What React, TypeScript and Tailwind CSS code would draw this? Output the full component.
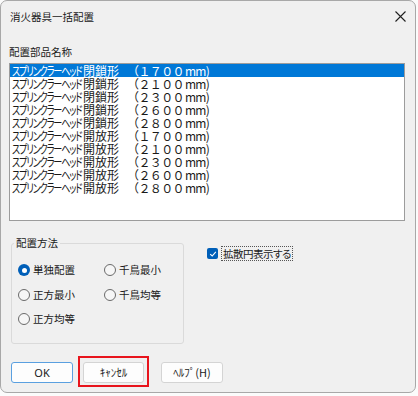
import React from "react";

const JP = "font-['Noto_Sans_CJK_JP','Noto_Sans',sans-serif]";

const rows: [string, string, string][] = [
  ["スプリンクラーヘッド", "閉鎖形", "（１７００"],
  ["スプリンクラーヘッド", "閉鎖形", "（２１００"],
  ["スプリンクラーヘッド", "閉鎖形", "（２３００"],
  ["スプリンクラーヘッド", "閉鎖形", "（２６００"],
  ["スプリンクラーヘッド", "閉鎖形", "（２８００"],
  ["スプリンクラーヘッド", "開放形", "（１７００"],
  ["スプリンクラーヘッド", "開放形", "（２１００"],
  ["スプリンクラーヘッド", "開放形", "（２３００"],
  ["スプリンクラーヘッド", "開放形", "（２６００"],
  ["スプリンクラーヘッド", "開放形", "（２８００"],
];

function Radio({ checked, label }: { checked?: boolean; label: string }) {
  return (
    <div className="flex items-center h-[24.5px]">
      {checked ? (
        <span className="w-[12px] h-[12px] rounded-full bg-[#005fb8] flex items-center justify-center">
          <span className="w-[5px] h-[5px] rounded-full bg-white" />
        </span>
      ) : (
        <span className="w-[12px] h-[12px] rounded-full border border-[#6a6a6a] bg-[#f6f6f6]" />
      )}
      <span className="ml-[3px] text-[10.5px] leading-[14px] text-[#1a1a1a]">{label}</span>
    </div>
  );
}

export default function App() {
  return (
    <div className={`w-[418px] h-[396px] bg-[#fbfbfb] ${JP}`}>
      <div className="w-[416px] h-[393px] bg-[#f0f0f0] border border-[#a8a8a8] rounded-[7px] flex flex-col">
        {/* Title bar */}
        <div className="h-[31px] flex items-center pl-[9px] pr-[10px] justify-between">
          <span className="text-[10.5px] leading-[14px] text-[#1a1a1a]">消火器具一括配置</span>
          <svg width="11" height="11" viewBox="0 0 11 11" className="mr-[-1px]">
            <path d="M0.5 0.5 L10.5 10.5 M10.5 0.5 L0.5 10.5" stroke="#1f1f1f" strokeWidth="1.1" />
          </svg>
        </div>
        <div className="px-[8px]">
          <div className="mt-[13px] text-[10.5px] leading-[14px] text-[#1a1a1a]">配置部品名称</div>
          <div className="mt-[4px] w-[396px] h-[158px] bg-white border border-[#9c9c9c]">
            {rows.map(([kana, kanji, size], i) => (
              <div
                key={i}
                className={`flex h-[13px] leading-[13px] text-[12px] pl-[2px] whitespace-nowrap ${
                  i === 0 ? "bg-[#0078d7] text-white" : "text-[#1a1a1a]"
                }`}
              >
                <span className="flex w-[71px] h-[13px]">
                  <span className="block h-[13px] origin-left scale-x-[0.76] tracking-[-1.5px] [font-feature-settings:'palt']">{kana}</span>
                </span>
                <span className="block w-[44px] h-[13px]">{kanji}</span>
                <span className="block h-[13px] tracking-[-0.6px]">{size}</span>
                <span className="block h-[13px] tracking-[-0.8px] ml-[1px]">mm</span>
                <span className="block h-[13px]">)</span>
              </div>
            ))}
          </div>
          <div className="flex mt-[15px]">
            <fieldset className="ml-[2px] w-[173px] h-[108px] border border-[#dadada] rounded-[3px]">
              <legend className="ml-[2px] px-[2px] text-[10.5px] leading-[14px] text-[#1a1a1a]">配置方法</legend>
              <div className="grid grid-cols-[86px_1fr] pl-[6px] pt-[8px]">
                <Radio checked label="単独配置" />
                <Radio label="千鳥最小" />
                <Radio label="正方最小" />
                <Radio label="千鳥均等" />
                <Radio label="正方均等" />
              </div>
            </fieldset>
            <div className="ml-[23px] mt-[10px] flex items-center h-[15px]">
              <span className="w-[11px] h-[11px] rounded-[2px] bg-[#005fb8] flex items-center justify-center">
                <svg width="8" height="8" viewBox="0 0 8 8">
                  <path d="M1.2 4.2 L3.2 6 L6.8 1.8" stroke="white" strokeWidth="1.1" fill="none" />
                </svg>
              </span>
              <span className="ml-[3px] h-[15px] px-[1px] border border-dotted border-[#555] text-[10.5px] leading-[13px] text-[#1a1a1a] tracking-[-0.5px] [font-feature-settings:'palt']">
                拡散円表示する
              </span>
            </div>
          </div>
          <div className="flex items-start mt-[12px]">
            <button className="ml-[2px] mt-[6px] w-[62px] h-[21px] bg-[#fdfdfd] border border-[#5aa0e0] rounded-[3px] text-[11px] leading-[19px] text-[#1a1a1a] font-['Noto_Sans',sans-serif]">
              OK
            </button>
            <div className="ml-[5px] flex border-2 border-[#e8141c] px-[3px] pt-[4px] pb-[2px]">
              <button className="w-[61px] h-[21px] bg-[#fdfdfd] border border-[#d4d4d4] rounded-[3px] text-[11px] leading-[19px] text-[#1a1a1a]">
                ｷｬﾝｾﾙ
              </button>
            </div>
            <button className="ml-[12px] mt-[6px] w-[62px] h-[21px] bg-[#fdfdfd] border border-[#d4d4d4] rounded-[3px] text-[11px] leading-[19px] text-[#1a1a1a]">
              ﾍﾙﾌﾟ(H)
            </button>
          </div>
        </div>
      </div>
    </div>
  );
}
